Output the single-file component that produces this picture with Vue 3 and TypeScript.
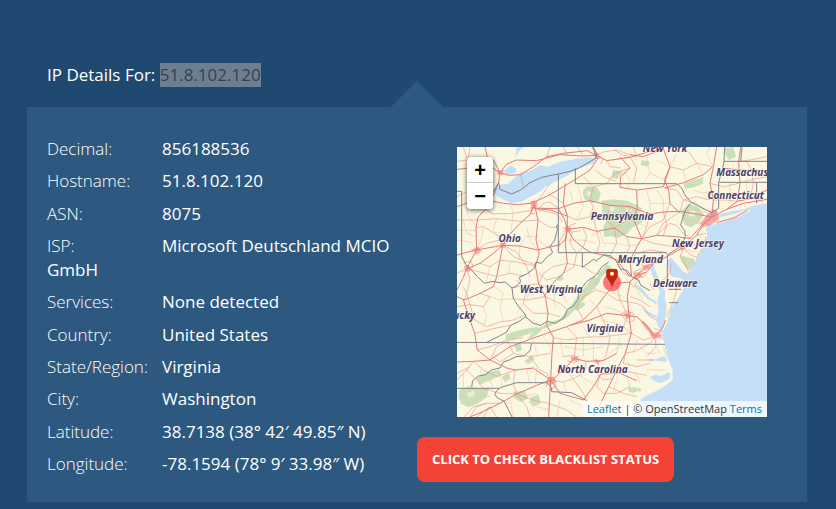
<script setup lang="ts">
interface Detail {
  label: string
  value: string
}

interface Place {
  name: string
  x: number
  y: number
  anchor: 'start' | 'middle' | 'end'
}

const address = '51.8.102.120'

const details: Detail[] = [
  { label: 'Decimal:', value: '856188536' },
  { label: 'Hostname:', value: '51.8.102.120' },
  { label: 'ASN:', value: '8075' },
  { label: 'ISP:', value: 'Microsoft Deutschland MCIO GmbH' },
  { label: 'Services:', value: 'None detected' },
  { label: 'Country:', value: 'United States' },
  { label: 'State/Region:', value: 'Virginia' },
  { label: 'City:', value: 'Washington' },
  { label: 'Latitude:', value: '38.7138 (38° 42′ 49.85″ N)' },
  { label: 'Longitude:', value: '-78.1594 (78° 9′ 33.98″ W)' },
]

const places: Place[] = [
  { name: 'New York', x: 645, y: 36, anchor: 'middle' },
  { name: 'Massachusetts', x: 799, y: 109, anchor: 'start' },
  { name: 'Connecticut', x: 857, y: 176, anchor: 'middle' },
  { name: 'Pennsylvania', x: 516, y: 239, anchor: 'middle' },
  { name: 'Ohio', x: 179, y: 305, anchor: 'middle' },
  { name: 'New Jersey', x: 744, y: 321, anchor: 'middle' },
  { name: 'Maryland', x: 571, y: 368, anchor: 'middle' },
  { name: 'Delaware', x: 676, y: 440, anchor: 'middle' },
  { name: 'West Virginia', x: 304, y: 459, anchor: 'middle' },
  { name: 'Kentucky', x: 75, y: 538, anchor: 'end' },
  { name: 'Virginia', x: 465, y: 576, anchor: 'middle' },
  { name: 'North Carolina', x: 428, y: 699, anchor: 'middle' },
]

const water: string[] = [
  // Lake Erie, Lake St. Clair and Lake Huron
  'M128 155L150 134L175 131L196 112L212 97L240 94L270 76L295 80L330 65L375 57L412 52L440 54L432 70L400 80L378 90L355 105L330 118L290 138L262 160L240 170L215 185L185 190L150 174Z',
  'M162 92L180 78L198 84L200 97L180 103L166 102Z',
  'M196 52L200 21H222L206 36Z',
  // Atlantic ocean
  'M951 190L905 198L885 207L850 212L820 220L790 230L772 252L768 264L772 290L760 325L742 352L728 378L717 402L700 395L680 372L662 352L652 365L656 390L664 410L690 414L708 425L697 455L680 480L664 505L652 545L636 582L644 615L652 650L668 690L668 720L640 742L610 757L575 775L545 831H951Z',
  // Chesapeake bay and its rivers
  'M608 352L600 376L606 404L618 430L630 456L622 480L626 512L618 540L626 562L638 580L642 548L648 522L650 500L644 474L646 452L632 438L624 410L614 385Z',
  'M560 434L580 449L600 474L622 486L618 492L592 476L572 455L555 440Z',
  'M572 502L598 517L620 528L616 534L590 522Z',
  // Carolina sounds
  'M592 656L620 658L638 648L652 657L648 666L625 662L600 664Z',
  'M600 712L614 704L634 708L655 696L662 704L656 718L632 730L612 722Z',
]

const islands: string[] = [
  'M774 250L810 232L850 222L882 212L902 208L898 216L870 228L840 240L790 254Z',
]

const woods: string[] = [
  'M400 150L412 138L440 142L452 158L446 182L428 190L404 178L398 164Z',
  'M455 182L490 178L530 182L562 196L576 205L566 224L582 236L570 252L548 262L530 282L505 294L482 288L462 292L460 262L470 240L456 220Z',
  'M490 90L520 95L500 118L484 112Z',
  'M575 60L600 65L592 80L572 74Z',
  'M692 215L715 192L745 200L762 222L748 246L722 262L704 254Z',
  'M690 345L712 352L732 356L738 370L720 392L705 380L694 364Z',
  'M700 130L735 118L760 112L758 132L730 142L705 146Z',
  'M825 25L850 21L858 50L838 60L826 45Z',
  'M432 408L450 422L432 448L408 470L382 502L350 534L318 550L278 568L252 590L232 598L246 578L282 556L330 536L356 508L372 484L398 450Z',
  'M470 372L486 382L456 410L440 438L430 432L448 398Z',
  'M166 584L210 570L260 560L272 568L235 582L190 598L168 600Z',
  'M28 750L60 738L92 746L118 742L110 772L84 790L55 802L34 790L26 772Z',
  'M80 715L112 696L148 690L154 704L118 722L88 734Z',
  'M192 614L212 608L216 630L200 636Z',
  'M222 664L246 646L254 656L236 672Z',
  'M244 770L266 764L272 790L250 800L238 786Z',
  'M190 755L225 752L234 776L212 786L192 774Z',
  'M534 744L556 740L564 752L548 760L536 754Z',
  'M558 742L574 746L570 758Z',
  'M155 710L176 700L182 716L164 726Z',
  'M372 500L402 486L406 496L378 514Z',
  'M320 412L336 402L342 418L326 424Z',
]

const clearings: string[] = [
  'M478 196L496 204L488 216L474 210Z',
  'M502 240L524 228L530 240L508 252Z',
  'M530 204L546 208L542 216L528 214Z',
  'M412 152L426 158L418 168L408 164Z',
  'M50 760L72 752L76 768L58 774Z',
  'M720 212L738 214L732 230L716 228Z',
]

const borders: string[] = [
  'M21 154H35V350L48 374L66 392L84 412L104 430L128 424L150 428L166 426L186 444L190 476L206 500L226 524L228 532L250 550L272 556L292 544L316 550L342 534L352 508L370 498L384 478L386 456L410 425L440 404L456 380L476 366',
  'M130 155L146 128L150 148L185 162L212 150L240 128L275 112L325 102L360 94L385 85L437 55L440 40L428 21',
  'M325 102V338H650',
  'M376 85V131H520L600 131L680 131L695 144L705 165L722 186L742 196L785 218',
  'M722 190L708 208L700 228L692 255L704 272L706 290L696 312L676 330L652 345L652 420',
  'M186 444L200 438L212 425L208 412L230 402L252 386L258 366L274 370L292 350L308 338L300 320L314 300L322 270L320 256L325 255',
  'M397 338V382L414 370L430 358L440 362L462 344L482 348L498 362L510 386L532 392L545 410L566 420L572 436L600 452',
  'M228 530L206 545L182 556L170 576L148 588L110 607',
  'M21 607L160 608L320 610L520 612L645 613',
  'M245 610L240 632L222 648L198 650L178 660L160 666L150 684L124 690L106 704L86 708L68 722L65 740',
  'M21 745H148L160 740L200 728L250 728L290 728L305 742V755L365 758L410 782',
  'M148 745L134 760L140 772L162 784L174 806L186 831',
  'M785 218L806 205V127H951',
  'M806 127L818 85L822 64L824 21M822 64H951M872 64L876 21M920 127V190',
  'M655 448H694M658 488H685',
]

const motorways: string[] = [
  'M21 88L60 84L100 66L150 98L170 72L200 60L260 62L330 44L400 48L440 46L470 62L540 52L600 34L640 26',
  'M105 21L112 50L130 60L150 98L146 128L132 162L118 190L106 208L84 232L78 262L80 330L62 362L50 386',
  'M150 98L176 106L212 104L250 80L290 50L340 40L412 32L436 46',
  'M21 200L60 186L120 182L160 190L200 194L240 190L262 182L300 164L340 140L380 116L420 90L442 58L436 44L428 21',
  'M240 190L256 206L300 210L352 228L352 268L344 240L325 206L240 204',
  'M21 345L78 330L158 316L210 318L262 330L330 314L345 300L352 268L400 262L440 274L494 264',
  'M252 188L264 240L258 300L268 340L256 378L266 432L286 470L294 520L290 556L310 592L306 640L302 720L300 755L296 831',
  'M158 316L182 280L210 250L240 224L252 196',
  'M158 316L130 340L90 370L50 386L40 412L21 450M158 316L150 360L140 410L130 440L90 460L44 480L21 470',
  'M352 228L340 190L346 130M352 268L372 300L398 322L420 336L470 348L500 360L540 410',
  'M352 268L346 310L352 370L340 400L318 420L300 440L282 470',
  'M325 206L370 190L420 182L480 196L540 200L600 222L640 216L690 214L740 222L785 232',
  'M494 264L530 290L575 296L620 286L680 290L720 296L750 262L785 232L800 212',
  'M785 232L790 180L780 130L790 80L800 21M785 232L830 208L862 184L870 130L866 64L872 21',
  'M785 232L762 250L740 286L700 322L660 345L620 366L588 380L562 404L540 426L532 470L536 520L544 580L526 640L500 690L476 740L452 790L430 831',
  'M540 426L556 408L590 396L610 372M540 426L500 430L470 460L440 500L400 540L350 560L290 580L240 598L180 620L120 660L70 664L21 666',
  'M533 527L560 530L590 556L615 590L640 560L646 540M533 527L470 520L420 540L360 556',
  'M40 480L60 540L74 580L82 630L120 660L170 684L196 690L250 684L305 722L340 690L372 656L410 664L460 662L500 640',
  'M302 720L260 736L200 762L150 790L100 814L60 831M302 720L330 760L400 780L430 740L452 702L510 700L560 722',
  'M540 44L580 50L640 26L660 80L644 120L656 150L660 190L690 220M660 80L640 140L562 150L510 142L512 110L540 84L510 50',
  'M644 144L700 128L760 104L786 82M560 150L562 200L552 240L575 296L562 318L540 360L545 410',
  'M862 184L900 176L951 150M830 208L880 190L951 178M820 84L866 90L951 92M800 248L850 234L892 212',
]

const roads: string[] = [
  'M60 21L54 60L21 64M40 21L60 84M212 104L220 140M100 66L70 110L60 150L21 170M78 262L100 260L150 290L158 316M21 240L78 240L140 236L210 244L264 240L300 262L325 262',
  'M106 208L130 222L190 220L252 210M158 316L190 350L260 376M158 316L200 336L230 380L240 410M80 330L110 310L150 300M90 370L120 380L150 360L200 366L256 378',
  'M52 386L90 396L140 410L180 400L220 408M21 400L52 386L60 420L44 480M40 370L62 362L70 380L52 396M64 330L84 322L94 334L78 344Z',
  'M262 182L280 160L300 130M264 210L280 190L300 186L325 206M248 206L242 222L256 220M266 210L320 222L338 246M300 164L320 176L340 190L352 228',
  'M338 262L366 276L392 272M340 276L360 256L378 250M352 268L330 300L325 330M366 276L360 310L380 340L372 380L340 400M398 262L410 290L400 322L380 340',
  'M420 182L430 140L400 110M430 140L470 131L494 100L540 84M440 274L450 310L440 336M480 196L470 240L494 264M494 264L500 310L480 348M540 200L530 240L494 264',
  'M430 21L440 46L460 56L452 72M440 46L460 36L500 30L540 44M486 60L540 52L560 84L550 131',
  'M436 90L460 110L500 124M575 296L600 260L640 240L660 190M620 286L640 250L690 214M575 296L610 310L660 318L700 322',
  'M540 360L560 340L600 330L640 336L660 345M545 410L520 400L498 362M562 404L580 412L590 396M556 420L580 400L572 386L552 396Z M540 426L552 442L564 420',
  'M700 322L720 344L740 352L760 320L768 290M720 300L740 320L768 300M740 286L768 280M700 322L690 350L704 370L718 400M724 296L700 280L680 256L660 250L620 286',
  'M690 214L700 180L740 170L780 180M700 180L680 150L644 144M785 232L760 210L740 190L700 180M790 180L830 180L862 184M780 130L820 140L866 130',
  'M866 64L900 60L951 50M866 130L900 120L951 110M900 176L910 130L905 92L890 64M920 170L940 190M660 80L700 90L740 70L790 80M740 70L720 40L700 21',
  'M21 500L60 494L100 500L120 470L90 460M60 494L74 540L110 560L150 546L190 540L226 524M74 580L130 566L180 556M60 494L50 460L40 440',
  'M186 444L220 436L266 432L310 450L350 440L386 456M190 476L230 480L286 470L330 490L352 508M200 420L230 450L220 490L250 520L294 520',
  'M266 432L280 400L310 380L352 370M266 400L290 420L320 412M352 370L400 380L430 400M400 540L380 500L400 470L440 450L470 460',
  'M294 520L330 530M310 592L350 600L400 592L460 590L544 580M350 560L380 592L372 656M440 500L460 540L480 590L470 640L460 662M500 430L510 480L533 527',
  'M533 527L520 560L544 580L580 600L615 590M512 524L530 512L550 520L554 540L536 548Z M526 640L560 632L600 610L615 590L618 620L590 650',
  'M620 540L600 530L580 500L560 490L536 486M600 576L622 590L634 574L612 564M604 586L640 596M540 470L570 480L600 500M470 460L500 480L536 486',
  'M82 630L120 620L170 600L190 640L240 650L302 640M120 660L140 620L180 600L220 592M130 650L150 666L190 640M305 722L290 700L270 690L240 650',
  'M21 720L50 690L70 664L100 690L140 710L196 690M21 700L60 680M50 690L80 720L100 745L150 760L200 762M196 690L190 730L200 762L230 800L240 831',
  'M200 762L250 780L296 790L350 810L380 831M296 750L318 740L312 718L292 720L290 742M302 720L340 726L370 716L400 700L410 664M350 690L372 720L400 760L410 782',
  'M340 650L372 646L390 660L372 668L352 662M430 660L446 672L440 700L460 720L490 716M452 702L440 740L460 760L500 760L540 740M500 690L540 696L590 706',
  'M526 640L520 670L560 680L600 670M560 660L610 660M476 740L520 760L560 770M60 831L80 800L110 790L150 790M80 831L120 800M100 831L120 800L140 831M42 831L70 800L110 790',
  'M300 21L290 50M340 21L352 44M382 21L400 48M550 21L560 50M492 30L520 46L560 50M470 62L480 80L512 84',
  'M352 228L380 240L420 230L430 200L420 182M430 230L440 274M530 290L540 320L530 338M600 222L590 260L575 296M640 216L650 250L640 290',
  'M640 420L660 400L664 370M670 420L680 450L668 490L650 530M674 450L690 430M664 425L690 422M616 425L640 440M600 430L610 450',
]

const lanes: string[] = [
  'M100 262L94 300L80 330M190 220L182 280M140 236L130 270L150 300M210 318L226 290L264 290M210 318L206 360M264 300L290 320L330 314M230 262L240 300L262 330',
  'M21 300L60 306L80 330M40 240L50 280L78 290M21 270L78 272M106 208L120 180M180 190L190 220M60 186L50 220L78 262M120 380L110 420M180 366L176 400',
  'M360 150L370 190M385 140L400 200L380 240M420 230L450 236L480 240M352 300L400 300L440 310M420 290L450 274L460 310M500 310L540 318L575 310M460 310L500 310M540 240L590 260',
  'M520 90L540 120L530 150M590 50L600 100L580 130M620 60L660 80M680 40L660 80M700 90L710 130M740 70L760 104M600 100L644 120M790 80L770 40L780 21',
  'M590 150L600 190L600 222M620 150L640 180L640 216M600 190L660 190M730 150L760 160L790 150M700 240L740 250L762 250M820 160L862 160M840 130V190M890 120V180',
  'M730 270L752 290L744 320M712 330L740 336M750 246L778 252L792 240M764 240L780 216L800 224M756 256L770 236L790 226M774 262L768 240L776 222',
  'M560 380L600 360L620 366M570 350L580 380M560 390L540 400L526 424M580 330L590 360M550 420L560 450L580 480M600 390L620 400',
  'M420 430L440 450M420 480L440 500M480 430L490 460L520 470M430 400L470 400L498 400M460 500L500 510L533 527M450 540L500 550L520 560M400 560L420 592',
  'M100 500L110 530L100 560M150 500L160 546M120 470L150 480L190 476M220 490L200 520M240 450L230 480M310 450L316 500M340 460L350 490M130 440L160 460L150 500',
  'M250 600L260 640M280 590L300 620M330 600L340 650M400 592L400 650M430 600L430 660M510 590L500 640M560 600L550 640M340 620L400 630L460 620M480 640L520 610',
  'M230 690L240 728M260 684L256 728M150 710L160 740M120 720L130 745M340 726L350 758M380 700L410 720L440 740M410 680L440 700M500 720L490 750M530 700L540 740',
  'M40 700L40 745M90 690L100 720M60 770L90 760L120 770M30 790L60 800M180 780L190 831M220 770L260 760M260 800L300 810M330 780L320 831M360 780L400 800L400 831',
  'M570 620L590 640L620 640M620 620L630 640M560 700L570 730M530 660L540 680M590 690L620 690L650 690M640 620L648 650',
]

const citySpots: string[] = [
  'M140 92L162 90L158 106L142 104Z',
  'M768 228L790 206L804 216L806 240L780 256L758 262L750 252Z',
  'M682 318L702 312L712 322L696 332Z',
  'M550 398L572 396L576 412L556 418Z',
  'M576 378L596 372L602 386L582 392Z',
  'M522 520L542 516L544 532L528 536Z',
  'M598 582L622 576L638 588L612 598Z',
  'M294 712L312 710L320 726L302 736L290 726Z',
  'M362 650L386 648L380 664L364 662Z',
  'M438 656L452 664L444 672L432 664Z',
  'M150 308L166 308L168 322L152 324Z',
  'M42 378L56 374L62 392L46 396Z',
  'M70 328L86 322L92 334L78 342Z',
  'M344 260L362 260L364 274L348 276Z',
  'M242 182L262 182L260 202L246 204Z',
  'M430 36L446 40L450 56L436 56Z',
  'M584 562L572 546L582 544L612 580L604 584Z',
]
</script>

<template>
  <main class="page">
    <h1 class="title">IP Details For: <mark class="address">{{ address }}</mark></h1>

    <section class="panel">
      <ul class="details">
        <li v-for="item in details" :key="item.label">
          <span class="label">{{ item.label }}</span><span class="value">{{ item.value }}</span>
        </li>
      </ul>

      <div class="side">
        <div class="map">
          <svg class="tiles" viewBox="21 21 930 810" preserveAspectRatio="xMidYMid slice" aria-hidden="true">
            <rect x="21" y="21" width="930" height="810" fill="#faf8e2" />
            <path v-for="d in woods" :key="d" :d="d" class="wood" />
            <path v-for="d in clearings" :key="d" :d="d" fill="#eef0d2" />
            <path v-for="d in lanes" :key="d" :d="d" class="lane" />
            <path v-for="d in water" :key="d" :d="d" fill="#c4dff6" />
            <path v-for="d in islands" :key="d" :d="d" fill="#f9f3df" />
            <path v-for="d in citySpots" :key="d" :d="d" class="city" />
            <path v-for="d in roads" :key="d" :d="d" class="road" />
            <path v-for="d in motorways" :key="d" :d="d" class="motorway" />
            <path v-for="d in borders" :key="d" :d="d" class="border" />
            <text
              v-for="place in places"
              :key="place.name"
              :x="place.x"
              :y="place.y"
              :text-anchor="place.anchor"
              class="place"
            >{{ place.name }}</text>
            <circle cx="486" cy="427" r="27" fill="#ff4a50" fill-opacity="0.75" />
            <path
              d="M475 388H497Q502 388 502 393V407Q502 411 499 415L493 424Q489 431 486 438Q483 431 479 424L473 415Q470 411 470 407V393Q470 388 475 388Z"
              fill="#c9250a"
              stroke="#96200c"
              stroke-width="2"
            />
            <circle cx="486" cy="401" r="6" fill="#fff3dc" />
          </svg>

          <div class="zoom">
            <button type="button" aria-label="Zoom in">+</button>
            <button type="button" aria-label="Zoom out">−</button>
          </div>

          <div class="attribution">
            <a href="#leaflet">Leaflet</a> | © OpenStreetMap <a href="#terms">Terms</a>
          </div>
        </div>

        <button type="button" class="check">CLICK TO CHECK BLACKLIST STATUS</button>
      </div>
    </section>
  </main>
</template>

<style>
body {
  background: #1f4971;
}
</style>

<style scoped>
.page {
  padding: 63px 29px 8px 27px;
  font-family: 'Open Sans', 'Noto Sans', sans-serif;
  font-size: 17px;
  line-height: 24px;
  color: #fff;
}

.title {
  margin: 0 0 20px;
  padding-left: 20px;
  font-size: 17px;
  font-weight: 500;
}

.address {
  display: inline-block;
  background: #6d7f8f;
  color: #36414e;
  font-weight: 400;
}

.panel {
  position: relative;
  display: grid;
  grid-template-columns: 1fr 1fr;
  padding: 30px 20px 20px;
  background: #2d5980;
}

.panel::before {
  content: '';
  position: absolute;
  bottom: 100%;
  left: 50%;
  width: 52px;
  height: 26px;
  margin-left: -26px;
  background: #2d5980;
  clip-path: polygon(50% 0, 100% 100%, 0 100%);
}

.details {
  display: flex;
  flex-direction: column;
  justify-content: space-between;
  margin: 0;
  padding: 0 0 6px;
  list-style: none;
}

.label {
  display: inline-block;
  width: 115px;
  font-weight: 300;
}

.value {
  font-weight: 500;
}

.side {
  display: flex;
  flex-direction: column;
  align-items: flex-start;
  gap: 20px;
  padding-top: 10px;
}

.map {
  position: relative;
  align-self: stretch;
  height: 270px;
  margin: 0 20px 0 40px;
  overflow: hidden;
}

.tiles {
  display: block;
  width: 100%;
  height: 100%;
}

.wood {
  fill: #c4dab0;
  fill-opacity: 0.85;
}

.city {
  fill: #f7928f;
  fill-opacity: 0.75;
}

.lane,
.road,
.motorway,
.border {
  fill: none;
  stroke-linejoin: round;
}

.lane {
  stroke: #f2c9ae;
  stroke-width: 2;
}

.road {
  stroke: #ec9a8a;
  stroke-width: 2;
}

.motorway {
  stroke: #e87a76;
  stroke-width: 3;
}

.border {
  stroke: #85838c;
  stroke-width: 3;
}

.place {
  font-family: 'Noto Sans', 'Open Sans', sans-serif;
  font-size: 30px;
  font-style: italic;
  font-weight: 700;
  fill: #4b4166;
  stroke: #fff;
  stroke-opacity: 0.6;
  stroke-width: 4;
  paint-order: stroke;
}

.zoom {
  position: absolute;
  top: 10px;
  left: 10px;
  width: 26px;
  border-radius: 4px;
  box-shadow: 0 1px 5px rgba(0, 0, 0, 0.65);
  overflow: hidden;
}

.zoom button {
  display: block;
  width: 26px;
  height: 26px;
  padding: 0;
  border: 0;
  background: #fff;
  color: #000;
  font: bold 20px/26px 'Liberation Sans', sans-serif;
}

.zoom button:first-child {
  border-bottom: 1px solid #ccc;
}

.attribution {
  position: absolute;
  right: 0;
  bottom: 0;
  padding: 0 5px;
  background: rgba(255, 255, 255, 0.7);
  color: #333;
  font-size: 11px;
  line-height: 16px;
  white-space: nowrap;
}

.attribution a {
  color: #0078a8;
  text-decoration: none;
}

.check {
  padding: 0 15px;
  border: 0;
  border-radius: 8px;
  background: #f44336;
  color: #fff;
  font: 700 13px/45px 'Open Sans', sans-serif;
}
</style>
